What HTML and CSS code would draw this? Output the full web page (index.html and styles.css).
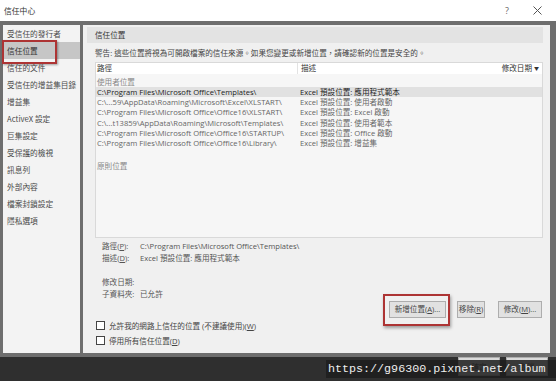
FILE: index.html
```html
<!DOCTYPE html>
<html lang="zh-Hant">
<head>
<meta charset="utf-8">
<title>信任中心</title>
<link rel="stylesheet" href="styles.css">
</head>
<body>
<div class="titlebar">
  <span class="title">信任中心</span>
  <span class="tb-btns">
    <span class="q">?</span>
    <svg class="x" width="9" height="9" viewBox="0 0 9 9"><path d="M0.5 0.5L8.5 8.5M8.5 0.5L0.5 8.5" stroke="#555" stroke-width="1"/></svg>
  </span>
</div>
<div class="main">
  <nav class="nav">
    <div class="nav-item">受信任的發行者</div>
    <div class="nav-item selected">信任位置</div>
    <div class="nav-item">信任的文件</div>
    <div class="nav-item">受信任的增益集目錄</div>
    <div class="nav-item">增益集</div>
    <div class="nav-item">ActiveX 設定</div>
    <div class="nav-item">巨集設定</div>
    <div class="nav-item">受保護的檢視</div>
    <div class="nav-item">訊息列</div>
    <div class="nav-item">外部內容</div>
    <div class="nav-item">檔案封鎖設定</div>
    <div class="nav-item">隱私選項</div>
  </nav>
  <section class="content">
    <div class="sec-head">信任位置</div>
    <div class="inner">
      <p class="warn">警告: 這些位置將視為可開啟檔案的信任來源。如果您變更或新增位置，請確認新的位置是安全的。</p>
      <div class="list">
        <div class="list-head"><span class="h1">路徑</span><span class="h2">描述</span><span class="h3">修改日期 <span class="arrow">▼</span></span></div>
        <div class="group">使用者位置</div>
        <div class="row sel"><span class="c1">C:\Program Files\Microsoft Office\Templates\</span><span class="c2">Excel 預設位置: 應用程式範本</span></div>
        <div class="row"><span class="c1">C:\...59\AppData\Roaming\Microsoft\Excel\XLSTART\</span><span class="c2">Excel 預設位置: 使用者啟動</span></div>
        <div class="row"><span class="c1">C:\Program Files\Microsoft Office\Office16\XLSTART\</span><span class="c2">Excel 預設位置: Excel 啟動</span></div>
        <div class="row"><span class="c1">C:\...t13859\AppData\Roaming\Microsoft\Templates\</span><span class="c2">Excel 預設位置: 使用者範本</span></div>
        <div class="row"><span class="c1">C:\Program Files\Microsoft Office\Office16\STARTUP\</span><span class="c2">Excel 預設位置: Office 啟動</span></div>
        <div class="row"><span class="c1">C:\Program Files\Microsoft Office\Office16\Library\</span><span class="c2">Excel 預設位置: 增益集</span></div>
        <div class="group policy">原則位置</div>
      </div>
      <div class="details">
        <div class="drow"><span class="lbl">路徑(<u>P</u>):</span><span>C:\Program Files\Microsoft Office\Templates\</span></div>
        <div class="drow"><span class="lbl">描述(<u>D</u>):</span><span>Excel 預設位置: 應用程式範本</span></div>
        <div class="drow gap-top"><span class="lbl">修改日期:</span><span></span></div>
        <div class="drow"><span class="lbl">子資料夾:</span><span>已允許</span></div>
      </div>
      <div class="buttons">
        <span class="btn b-add">新增位置(<u>A</u>)...</span>
        <span class="btn b-del">移除(<u>R</u>)</span>
        <span class="btn b-mod">修改(<u>M</u>)...</span>
      </div>
      <div class="check"><span class="box"></span><span>允許我的網路上信任的位置 (不建議使用)(<u>W</u>)</span></div>
      <div class="check"><span class="box"></span><span>停用所有信任位置(<u>D</u>)</span></div>
    </div>
  </section>
</div>
<div class="footer">
  <div class="okcancel"><span class="fbtn">確定</span><span class="fbtn">取消</span></div>
  <div class="watermark">https://g96300.pixnet.net/album</div>
</div>
</body>
</html>
```
FILE: styles.css
```css
* { box-sizing: border-box; }
html, body { margin: 0; padding: 0; }
body {
  width: 556px;
  height: 381px;
  overflow: hidden;
  background: #6e6e6e;
  font-family: "Open Sans", "Noto Sans CJK TC", sans-serif;
  font-size: 7.6px;
  color: #444;
}
u { text-decoration: underline; }
p { margin: 0; }

.titlebar {
  height: 21px;
  background: #fff;
  display: flex;
  align-items: center;
  justify-content: space-between;
  padding: 0 14px 0 4px;
}
.title { font-family: "Noto Sans CJK TC", sans-serif; font-size: 7.8px; color: #333; }
.tb-btns { display: flex; align-items: center; gap: 24px; color: #666; font-size: 9px; }

.main {
  display: flex;
  gap: 3px;
  height: 336px;
  padding: 4px 6px 4px 3px;
}
.nav {
  width: 77px;
  background: #f3f3f3;
  font-family: "Noto Sans CJK TC", sans-serif;
  font-size: 7.7px;
  color: #4a4a4a;
}
.nav-item {
  height: 17px;
  line-height: 17px;
  padding-left: 4px;
  white-space: nowrap;
}
.nav-item.selected {
  position: relative;
  background: #c6c6c6;
  color: #333;
}
.nav-item.selected::after {
  content: "";
  position: absolute;
  left: -1px;
  top: -2px;
  width: 51px;
  height: 20px;
  border: 2px solid #ad3434;
  box-shadow: 1px 1px 2px rgba(0,0,0,.35);
}

.content {
  flex: 1;
  background: #f0f0f0;
  padding: 2px 7px 0 4px;
}
.sec-head {
  height: 16px;
  line-height: 16px;
  background: #e3e3e3;
  padding-left: 8px;
  font-family: "Noto Sans CJK TC", sans-serif;
  color: #333;
}
.inner { padding-left: 8px; }
.warn {
  margin: 4px 0 3px;
  line-height: 12px;
  color: #444;
  white-space: nowrap;
}

.list {
  height: 176px;
  background: #f6f6f6;
  border: 1px solid #d9d9d9;
  overflow: hidden;
}
.list-head {
  display: flex;
  height: 11px;
  line-height: 11px;
  background: #fff;
  color: #333;
}
.h1 { width: 202px; padding-left: 1px; border-right: 1px solid #e3e3e3; }
.h2 { flex: 1; padding-left: 3px; }
.h3 { width: 44px; text-align: right; padding-right: 3px; white-space: nowrap; }
.arrow { font-size: 5px; vertical-align: 1px; }
.group {
  margin-top: 3px;
  line-height: 10px;
  padding-left: 1px;
  color: #888;
}
.group.policy { margin-top: 13px; }
.row {
  display: flex;
  height: 10.2px;
  line-height: 10.2px;
  color: #666;
  white-space: nowrap;
}
.row.sel { background: #e1e1e1; color: #222; }
.c1 { width: 204px; padding-left: 1px; overflow: hidden; }
.c2 { flex: 1; }

.details { margin-top: 2px; padding-left: 7px; color: #555; }
.drow { display: flex; line-height: 12px; height: 12px; white-space: nowrap; }
.drow.gap-top { margin-top: 12px; }
.lbl { width: 38px; }

.buttons {
  display: flex;
  justify-content: flex-end;
  gap: 11px;
  margin-top: 1px;
  padding-right: 1px;
}
.btn {
  height: 17px;
  line-height: 15px;
  background: #e1e1e1;
  border: 1px solid #adadad;
  text-align: center;
  color: #444;
  white-space: nowrap;
}
.b-add { width: 57px; position: relative; }
.b-del { width: 28px; }
.b-mod { width: 44px; margin-left: 2px; }
.b-add::after {
  content: "";
  position: absolute;
  left: -7px;
  top: -8px;
  right: -5px;
  bottom: -9px;
  border: 2px solid #ad3434;
  box-shadow: 1px 2px 3px rgba(0,0,0,.35);
}

.check {
  display: flex;
  align-items: center;
  gap: 4px;
  height: 15px;
  padding-left: 1px;
  color: #444;
  white-space: nowrap;
}
.check:first-of-type { margin-top: 1px; }
.box {
  width: 9px;
  height: 9px;
  border: 1px solid #444;
  background: #fff;
}

.footer {
  position: relative;
  height: 24px;
  background: #2f2f2f;
}
.okcancel {
  display: flex;
  justify-content: flex-end;
  gap: 6px;
  padding-right: 8px;
}
.fbtn {
  width: 42px;
  height: 19px;
  line-height: 17px;
  background: #dadada;
  border: 1px solid #adadad;
  text-align: center;
  color: #333;
  font-family: "Noto Sans CJK TC", sans-serif;
}
.watermark {
  position: absolute;
  left: 326px;
  right: 0;
  top: 3px;
  height: 18px;
  line-height: 18px;
  padding-left: 2px;
  background: rgba(30,30,30,.86);
  color: #eee;
  font-family: "Liberation Mono", monospace;
  font-size: 11.7px;
  white-space: nowrap;
}
```
